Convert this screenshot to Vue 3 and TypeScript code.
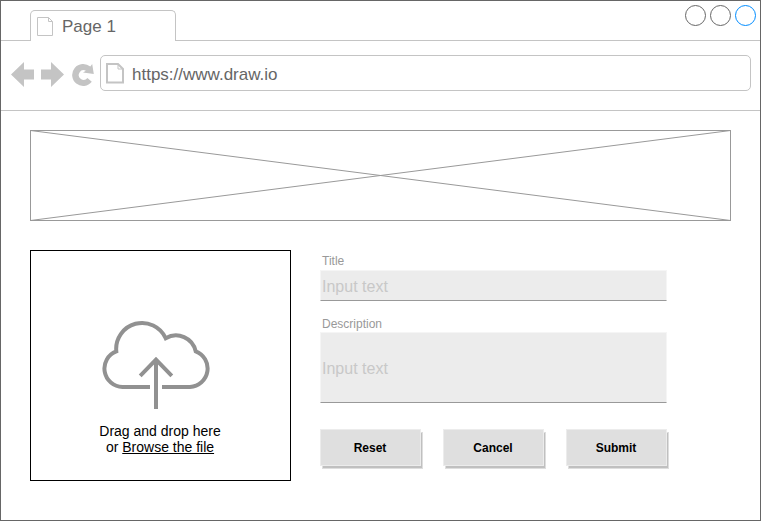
<script setup lang="ts">
import { ref } from 'vue'

const url = ref('https://www.draw.io')
const controls = ['#666666', '#666666', '#008cff']
const fields = [
  { id: 'title', label: 'Title', placeholder: 'Input text' },
  { id: 'description', label: 'Description', placeholder: 'Input text' },
]
const actions = ['Reset', 'Cancel', 'Submit']
</script>

<template>
  <div class="browser">
    <header class="tabs">
      <div class="tab">
        <svg class="tab-page" width="17" height="20" viewBox="0 0 17 20">
          <path d="M.5 .5H11.5L15.5 4.5V18.5H.5ZM11.5 .5V4.5H15.5" />
        </svg>
        <span>Page 1</span>
      </div>
      <svg class="controls" width="71" height="21" viewBox="0 0 71 21">
        <circle v-for="(color, i) in controls" :key="i" :cx="10.5 + i * 25" cy="10.5" r="10" :stroke="color" />
      </svg>
    </header>

    <nav class="toolbar">
      <svg class="nav-icons" width="84" height="28" viewBox="0 0 84 28">
        <path d="M0 13.5L13 1V8.5H23V18.5H13V26Z" />
        <path d="M53 13.5L40 1V8.5H30V18.5H40V26Z" />
        <path d="M79.3 5.6L81.2 3L82.8 13L72 11.4L74.9 9.8A4.8 4.8 0 1 0 76.4 17L80.8 20.8A11 11 0 1 1 79.3 5.6Z" />
      </svg>
      <div class="address">
        <svg class="url-page" width="18" height="21" viewBox="0 0 18 21">
          <path d="M1 1H12L17 6V19.5H1Z" />
          <path class="fold" d="M12 1V6H17" />
        </svg>
        <span>{{ url }}</span>
      </div>
    </nav>

    <main class="page">
      <svg class="banner" width="701" height="91" viewBox="0 0 701 91">
        <rect x=".5" y=".5" width="700" height="90" />
        <path d="M.5 .5L700.5 90.5M.5 90.5L700.5 .5" />
      </svg>
      <div class="content">
        <section class="drop">
          <svg width="110" height="90" viewBox="101 320 110 90">
            <path
              d="M150 386.9H122.5A18.4 18.4 0 0 1 116.3 351.3A25.9 25.9 0 0 1 165.7 338.2A20.2 20.2 0 0 1 195.7 351.3A18.4 18.4 0 0 1 190 386.9H162"
            />
            <path d="M156 409V359.5M140.2 375.8L156 359.7L171.8 375.8" />
          </svg>
          <p>Drag and drop here<br />or <a>Browse the file</a></p>
        </section>
        <form class="form" @submit.prevent>
          <div v-for="field in fields" :key="field.id" class="field" :class="field.id">
            <label>{{ field.label }}</label>
            <div class="input">{{ field.placeholder }}</div>
          </div>
          <div class="actions">
            <button v-for="action in actions" :key="action" type="button">{{ action }}</button>
          </div>
        </form>
      </div>
    </main>
  </div>
</template>

<style>
body {
  margin: 0;
  background: #fff;
}
</style>

<style scoped>
.browser {
  box-sizing: border-box;
  width: 761px;
  height: 521px;
  border: 1px solid #666;
  background: #fff;
  font-family: "Liberation Sans", Arial, sans-serif;
  overflow: hidden;
}
svg {
  display: block;
  flex: none;
  fill: none;
}
.tabs {
  box-sizing: border-box;
  display: flex;
  justify-content: space-between;
  height: 40px;
  padding: 0 4px 0 29px;
  border-bottom: 1px solid #c4c4c4;
}
.tab {
  box-sizing: border-box;
  display: flex;
  gap: 8px;
  width: 146px;
  height: 31px;
  margin-top: 9px;
  padding: 6px 0 0 6px;
  border: 1px solid #c4c4c4;
  border-bottom: 0;
  border-radius: 5px 5px 0 0;
  background: #fff;
  color: #666;
  font-size: 17px;
  line-height: 20px;
}
.tab-page {
  stroke: #c4c4c4;
}
.controls {
  margin-top: 4px;
}
.toolbar {
  box-sizing: border-box;
  display: flex;
  height: 70px;
  padding: 14px 9px 0 10px;
  border-bottom: 1px solid #c4c4c4;
}
.nav-icons {
  margin: 6px 5px 0 0;
  fill: #c4c4c4;
}
.address {
  box-sizing: border-box;
  display: flex;
  align-items: center;
  gap: 8px;
  width: 651px;
  height: 36px;
  padding-left: 5px;
  border: 1px solid #c4c4c4;
  border-radius: 5px;
  color: #666;
  font-size: 17px;
  line-height: 20px;
}
.address span {
  padding-top: 4px;
}
.url-page {
  stroke: #c4c4c4;
  stroke-width: 2;
}
.url-page .fold {
  stroke-width: 1;
}
.page {
  padding: 19px 29px;
}
.banner {
  stroke: #999;
}
.content {
  display: flex;
  gap: 29px;
  margin-top: 29px;
}
.drop {
  box-sizing: border-box;
  display: flex;
  flex-direction: column;
  align-items: center;
  width: 261px;
  height: 231px;
  padding-top: 69px;
  border: 1px solid #000;
}
.drop svg {
  margin-right: 9px;
  stroke: #919191;
  stroke-width: 4;
}
.drop p {
  margin: 13px 1px 0 0;
  color: #000;
  font-size: 14px;
  line-height: 16px;
  text-align: center;
}
.drop a {
  text-decoration: underline;
}
.form {
  width: 349px;
}
.field {
  width: 347px;
}
.field label {
  display: block;
  padding-left: 2px;
  color: #999;
  font-size: 12px;
  line-height: 14px;
}
.title label {
  padding-top: 4px;
  padding-bottom: 2px;
}
.description label {
  padding-top: 16px;
  padding-bottom: 1px;
}
.input {
  box-sizing: border-box;
  display: flex;
  align-items: center;
  height: 31px;
  padding: 2px 0 0 1px;
  border: 1px solid #f5f5f5;
  border-bottom-color: #999;
  background: #ececec;
  color: #c8c8c8;
  font-size: 16px;
  line-height: 18px;
}
.description .input {
  height: 71px;
}
.actions {
  display: flex;
  gap: 22px;
  margin-top: 26px;
}
.actions button {
  box-sizing: border-box;
  width: 101px;
  height: 37px;
  padding: 0 1px 0 0;
  border: 1px solid #ececec;
  background: #dfdfdf;
  box-shadow: 2px 3px 0 -1px #c0c0c0, 2px 3px 0 #dedede;
  color: #000;
  font: bold 12px "Liberation Sans", Arial, sans-serif;
}
</style>
